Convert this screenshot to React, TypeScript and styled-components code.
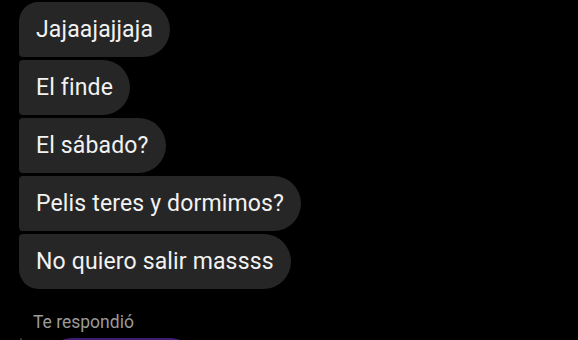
import React from "react";
import styled, { createGlobalStyle } from "styled-components";

const Global = createGlobalStyle`
  html, body { margin: 0; padding: 0; background: #000; overflow: hidden; }
  body { font-family: Roboto, "Noto Sans", sans-serif; }
`;

const Thread = styled.div`
  width: 578px;
  height: 340px;
  background: #000;
  padding: 2px 0 0 19px;
  box-sizing: border-box;
  display: flex;
  flex-direction: column;
  align-items: flex-start;
  overflow: hidden;
`;

const Group = styled.div`
  display: flex;
  flex-direction: column;
  align-items: flex-start;
  gap: 3px;
`;

type Pos = "first" | "middle" | "last";

const radii: Record<Pos, string> = {
  first: "20px 28px 28px 4px",
  middle: "4px 28px 28px 4px",
  last: "4px 28px 28px 20px",
};

const Bubble = styled.div<{ $pos: Pos }>`
  height: 55px;
  display: flex;
  align-items: center;
  padding: 0 17px 1px 17px;
  box-sizing: border-box;
  background: #262626;
  color: #f2f2f2;
  font-size: 23px;
  letter-spacing: 0.15px;
  border-radius: ${(p) => radii[p.$pos]};
  white-space: nowrap;
`;

const ReplyLabel = styled.div`
  margin: 23px 0 0 14px;
  color: #9a9a9a;
  font-size: 17.5px;
  line-height: 20px;
`;

const ReplyRow = styled.div`
  display: flex;
  align-items: flex-start;
  gap: 29px;
  margin-top: 6px;
`;

const ReplyBar = styled.div`
  width: 2px;
  height: 20px;
  background: #3a3a3a;
  border-radius: 1px;
  margin-left: 1px;
`;

const ReplyBubble = styled.div`
  width: 140px;
  height: 40px;
  background: #3b1e6f;
  border-radius: 20px;
`;

const messages = [
  "Jajaajajjaja",
  "El finde",
  "El sábado?",
  "Pelis teres y dormimos?",
  "No quiero salir massss",
];

export default function App() {
  return (
    <>
      <Global />
      <Thread>
        <Group>
          {messages.map((m, i) => (
            <Bubble
              key={i}
              $pos={i === 0 ? "first" : i === messages.length - 1 ? "last" : "middle"}
            >
              {m}
            </Bubble>
          ))}
        </Group>
        <ReplyLabel>Te respondió</ReplyLabel>
        <ReplyRow>
          <ReplyBar />
          <ReplyBubble />
        </ReplyRow>
      </Thread>
    </>
  );
}
